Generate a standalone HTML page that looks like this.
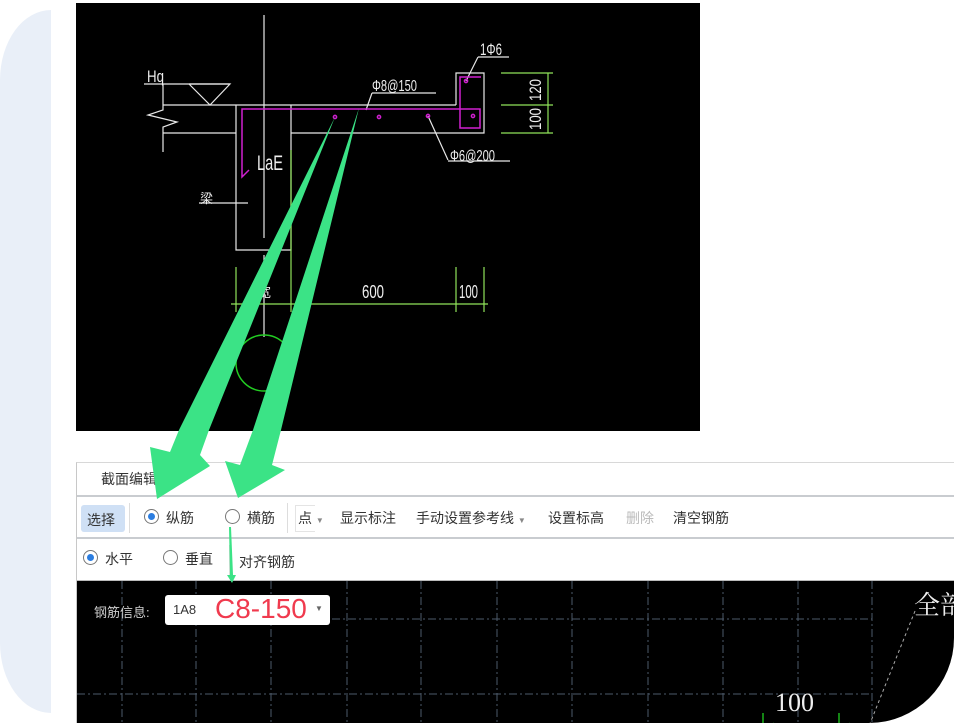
<!DOCTYPE html>
<html><head><meta charset="utf-8"><style>
*{margin:0;padding:0;box-sizing:border-box}
body{width:954px;height:723px;background:#fff;position:relative;overflow:hidden;font-family:"Liberation Sans","Noto Sans CJK SC",sans-serif}
.side{position:absolute;left:0;top:10px;width:51px;height:703px;background:#e9eff8;border-radius:51px 0 0 51px/70px 0 0 70px}
.cad{position:absolute;left:76px;top:3px;width:624px;height:428px;background:#000}
.shot{position:absolute;left:76px;top:462px;width:878px;height:261px;border-left:1px solid #c8c8c8;border-top:1px solid #d8d8d8;border-bottom-right-radius:85px;overflow:hidden;background:#fff}
.r1{height:34px;border-bottom:2px solid #c9ccd0;font-size:14px;color:#333;padding:6px 0 0 24px}
.r2{height:42px;border-bottom:2px solid #c9ccd0;position:relative;font-size:14px;color:#333}
.r3{height:42px;border-bottom:1px solid #bbb;position:relative;font-size:14px;color:#333}
.t{position:absolute;white-space:nowrap}
.rad{position:absolute;width:15px;height:15px;border:1px solid #777;border-radius:50%;background:#fff}
.rad.on::after{content:"";position:absolute;left:3px;top:3px;width:7px;height:7px;border-radius:50%;background:#2b7de0}
.canvas{position:absolute;left:0;top:118px;width:878px;height:150px;background:#000}
</style></head><body>
<div class="side"></div>
<div class="cad">
<svg width="624" height="428" viewBox="76 3 624 428" style="position:absolute;left:0;top:0" font-family="Liberation Sans" >
<g stroke="#e8e8e8" stroke-width="1.2" fill="none">
<line x1="264" y1="15" x2="264" y2="238"/><line x1="264" y1="255" x2="264" y2="337"/>
<line x1="144" y1="84" x2="230" y2="84"/>
<polyline points="189,84 230,84 210,105 189,84"/>
<line x1="163" y1="105" x2="456" y2="105"/>
<polyline points="456,105 456,73 484,73 484,133 291,133"/>
<line x1="163" y1="133" x2="236" y2="133"/>
<polyline points="163,84 163,110 148,115 177,122 163,127 163,152"/>
<polyline points="236,105 236,250 291,250 291,105"/>
<line x1="199" y1="203" x2="248" y2="203"/>
<line x1="372" y1="93" x2="436" y2="93"/><line x1="372" y1="93" x2="366" y2="110"/>
<line x1="448" y1="161" x2="510" y2="161"/><line x1="428" y1="116" x2="448" y2="160"/>
<line x1="478" y1="57" x2="509" y2="57"/><line x1="478" y1="57" x2="466" y2="81"/>
</g>
<g fill="#eee" font-size="15">
<text x="147" y="82" font-size="17" textLength="17" lengthAdjust="spacingAndGlyphs">Hq</text>
<text x="257" y="170" font-size="21" textLength="26" lengthAdjust="spacingAndGlyphs">LaE</text>
<text x="372" y="91" font-size="16" textLength="45" lengthAdjust="spacingAndGlyphs">Φ8@150</text>
<text x="450" y="161" font-size="16" textLength="45" lengthAdjust="spacingAndGlyphs">Φ6@200</text>
<text x="480" y="55" font-size="17" textLength="22" lengthAdjust="spacingAndGlyphs">1Φ6</text>
<text x="200" y="203" font-size="13" font-family="Noto Sans CJK SC">梁</text>
<text x="362" y="298" font-size="18" textLength="22" lengthAdjust="spacingAndGlyphs">600</text>
<text x="459" y="298" font-size="18" textLength="19" lengthAdjust="spacingAndGlyphs">100</text>
<text x="258" y="297" font-size="13" font-family="Noto Sans CJK SC">宽</text>
<text transform="translate(541,101) rotate(-90)" font-size="17" textLength="22" lengthAdjust="spacingAndGlyphs">120</text>
<text transform="translate(541,130) rotate(-90)" font-size="17" textLength="22" lengthAdjust="spacingAndGlyphs">100</text>
</g>
<g stroke="#d020d0" stroke-width="1.5" fill="none">
<polyline points="249,170 242,177 242,109 480,109 480,128 460,128 460,77 481,77"/>
<circle cx="335" cy="117" r="1.6"/><circle cx="379" cy="117" r="1.6"/><circle cx="428" cy="116" r="1.6"/><circle cx="473" cy="116" r="1.6"/><circle cx="466" cy="81" r="1.6"/>
</g>
<g stroke="#8fe35a" stroke-width="1.2" fill="none">
<line x1="548" y1="73" x2="548" y2="133"/>
<line x1="501" y1="73" x2="553" y2="73"/><line x1="501" y1="105" x2="553" y2="105"/><line x1="501" y1="133" x2="553" y2="133"/>
<line x1="231" y1="304" x2="488" y2="304"/>
<line x1="236" y1="267" x2="236" y2="312"/><line x1="291" y1="150" x2="291" y2="312"/>
<line x1="456" y1="267" x2="456" y2="312"/><line x1="484" y1="267" x2="484" y2="312"/>
</g>
<circle cx="264" cy="363" r="28" stroke="#22cc22" stroke-width="1.5" fill="none"/>
</svg>
</div>
<div class="shot">
<div class="r1">截面编辑</div>
<div class="r2">
<div class="t" style="left:4px;top:8px;width:44px;height:27px;background:#cfe0f5;border-radius:3px;padding:5px 0 0 6px">选择</div>
<div class="t" style="left:52px;top:6px;width:1px;height:30px;background:#ddd"></div>
<div class="rad on" style="left:67px;top:12px"></div><div class="t" style="left:89px;top:11px">纵筋</div>
<div class="rad" style="left:148px;top:12px"></div><div class="t" style="left:170px;top:11px">横筋</div>
<div class="t" style="left:210px;top:6px;width:1px;height:30px;background:#ddd"></div>
<div class="t" style="left:218px;top:8px;width:20px;height:27px;border:1px solid #e4e4e4;border-right:none"></div>
<div class="t" style="left:221px;top:11px">点 <span style="font-size:8px;color:#888">▼</span></div>
<div class="t" style="left:263px;top:11px">显示标注</div>
<div class="t" style="left:339px;top:11px">手动设置参考线 <span style="font-size:8px;color:#888">▼</span></div>
<div class="t" style="left:471px;top:11px">设置标高</div>
<div class="t" style="left:549px;top:11px;color:#bbb">删除</div>
<div class="t" style="left:596px;top:11px">清空钢筋</div>
</div>
<div class="r3">
<div class="rad on" style="left:6px;top:11px"></div><div class="t" style="left:28px;top:10px">水平</div>
<div class="rad" style="left:86px;top:11px"></div><div class="t" style="left:108px;top:10px">垂直</div>
<div class="t" style="left:152px;top:6px;width:1px;height:30px;background:#ddd"></div>
<div class="t" style="left:162px;top:13px">对齐钢筋</div>
</div>
<div class="canvas">
<svg width="878" height="150" style="position:absolute;left:0;top:0">
<g stroke="#4d5a6a" stroke-width="1" stroke-dasharray="8 3 2 3">
<line x1="45" y1="0" x2="45" y2="150"/><line x1="119" y1="0" x2="119" y2="150"/><line x1="194" y1="0" x2="194" y2="150"/><line x1="270" y1="0" x2="270" y2="150"/><line x1="344" y1="0" x2="344" y2="150"/><line x1="420" y1="0" x2="420" y2="150"/><line x1="495" y1="0" x2="495" y2="150"/><line x1="571" y1="0" x2="571" y2="150"/><line x1="646" y1="0" x2="646" y2="150"/><line x1="721" y1="0" x2="721" y2="150"/><line x1="795" y1="0" x2="795" y2="150"/>
<line x1="255" y1="38" x2="795" y2="38"/><line x1="0" y1="113" x2="795" y2="113"/>
</g>
<line x1="838" y1="30" x2="790" y2="150" stroke="#aaa" stroke-dasharray="3 3"/>
<text x="837" y="33" fill="#eee" font-size="26" font-family="Noto Serif CJK SC,serif">全部</text>
<text x="698" y="130" fill="#eee" font-size="26" font-family="Liberation Serif">100</text>
<g stroke="#2d2" stroke-width="1.2"><line x1="686" y1="132" x2="686" y2="150"/><line x1="762" y1="132" x2="762" y2="150"/><line x1="690" y1="150" x2="697" y2="142"/><line x1="766" y1="150" x2="773" y2="142"/></g>
</svg>
<div class="t" style="left:17px;top:21px;color:#ccc;font-size:13px">钢筋信息:</div>
<div class="t" style="left:88px;top:14px;width:165px;height:30px;background:#fff;border-radius:3px">
<span class="t" style="left:8px;top:7px;font-size:13px;color:#333">1A8</span>
<span class="t" style="left:50px;top:-2px;font-size:28px;color:#f03a4e">C8-150</span>
<span class="t" style="left:150px;top:9px;font-size:8px;color:#666">▼</span>
</div>
</div>
</div>
<svg width="954" height="723" style="position:absolute;left:0;top:0">
<g fill="#3be386">
<polygon points="335,117 209,430 200,455 210,466 157,499 150,447 170,452 179,430"/>
<polygon points="359,108 281,430 272,465 285,470 238,498 225,461 240,465 253,430"/>
<polygon points="229,527 231,527 233,575 236,575 232,583 227,575 230,575"/>
</g>
</svg>
</body></html>
